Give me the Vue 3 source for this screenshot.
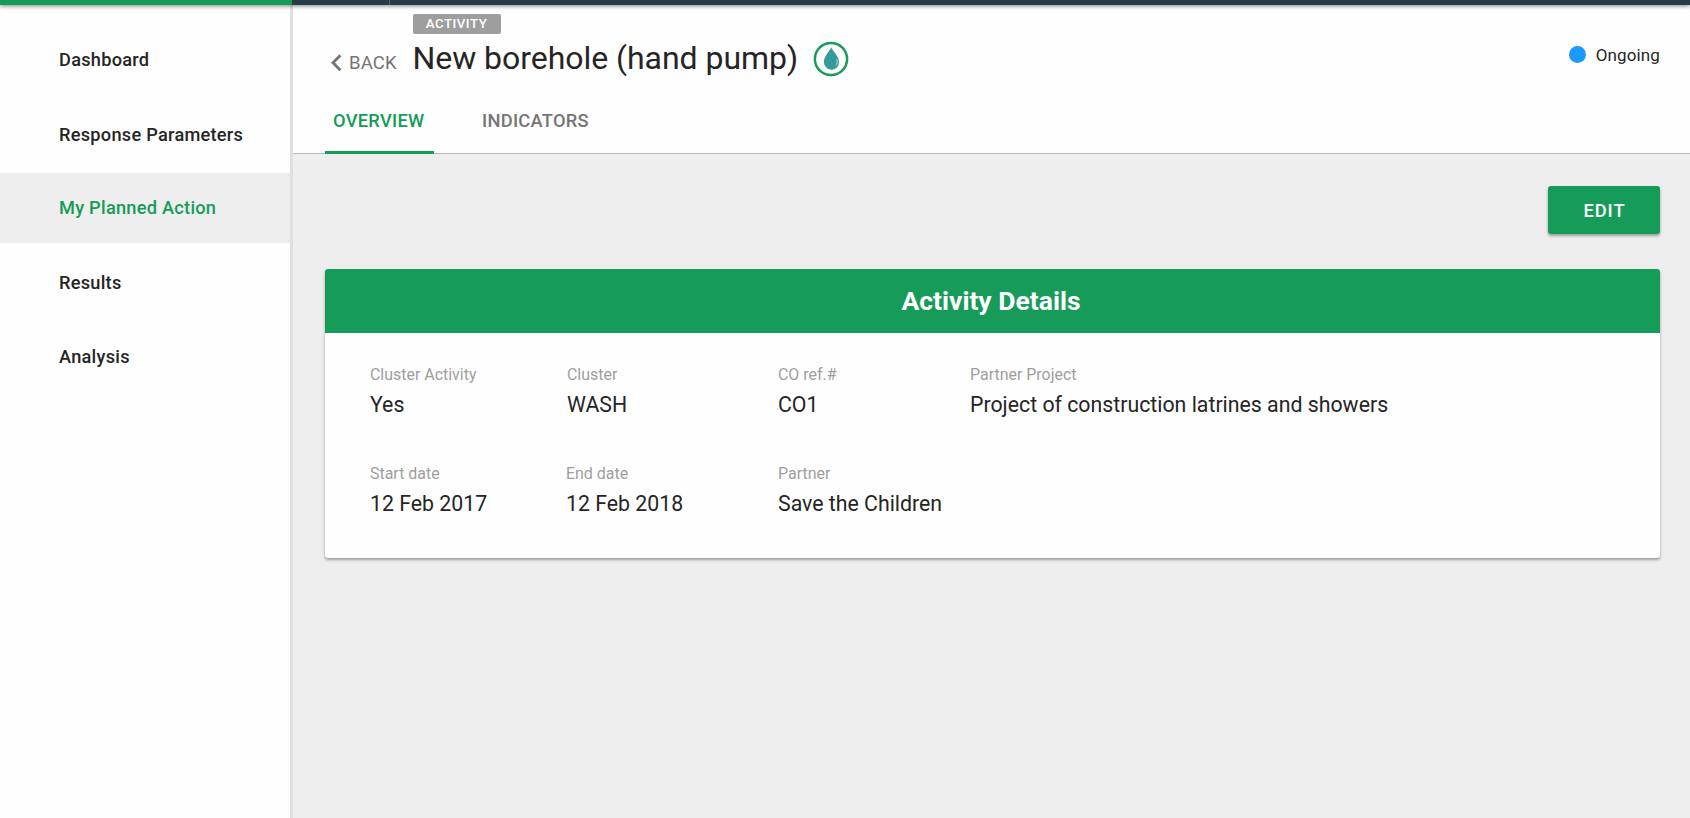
<script setup>
const nav = [
  { label: 'Dashboard' },
  { label: 'Response Parameters' },
  { label: 'My Planned Action', active: true },
  { label: 'Results' },
  { label: 'Analysis' },
]
const tabs = ['Overview', 'Indicators']
const rows = [
  [
    { label: 'Cluster Activity', value: 'Yes' },
    { label: 'Cluster', value: 'WASH' },
    { label: 'CO ref.#', value: 'CO1' },
    { label: 'Partner Project', value: 'Project of construction latrines and showers' },
  ],
  [
    { label: 'Start date', value: '12 Feb 2017' },
    { label: 'End date', value: '12 Feb 2018' },
    { label: 'Partner', value: 'Save the Children' },
  ],
]
</script>

<template>
  <div class="page">
    <div class="topbar">
      <div class="topbar-brand"></div>
      <div class="topbar-menu"></div>
    </div>
    <div class="body">
      <nav class="sidebar">
        <a v-for="item in nav" :key="item.label" class="nav-item" :class="{ active: item.active }">
          <span>{{ item.label }}</span>
        </a>
      </nav>
      <main class="main">
        <header class="header">
          <div class="heading">
            <a class="back">
              <svg class="chevron" width="11" height="18" viewBox="0 0 11 18">
                <path d="M9.400 1.200 2 8.700l7.400 7.500" fill="none" stroke="#757575" stroke-width="2.900" />
              </svg>
              <span class="back-text">BACK</span>
            </a>
            <div class="title-block">
              <span class="badge"><span>ACTIVITY</span></span>
              <div class="title-row">
                <h1 class="title">New borehole (hand pump)</h1>
                <svg class="drop" width="36" height="36" viewBox="0 0 36 36">
                  <circle cx="18" cy="18" r="16.100" fill="#fff" stroke="#179b59" stroke-width="2.500" />
                  <path d="M18.200 6.200C16.500 10.500 10.900 15.200 10.900 21.100a7.600 7.600 0 0 0 15.200 0C26.100 15.200 19.900 10.500 18.200 6.200Z" fill="#349a9c" />
                  <path d="M23.700 18.500c1 2.300.5 4.700-1.100 5.900" fill="none" stroke="#e4f2f2" stroke-width="0.900" />
                </svg>
              </div>
            </div>
            <div class="status"><i class="dot"></i><span class="status-text">Ongoing</span></div>
          </div>
          <div class="tabs">
            <a v-for="(tab, i) in tabs" :key="tab" class="tab" :class="{ selected: i === 0 }">
              <span>{{ tab }}</span>
            </a>
          </div>
        </header>
        <section class="content">
          <div class="actions"><button class="edit"><span>EDIT</span></button></div>
          <article class="card">
            <h2 class="card-title"><span>Activity Details</span></h2>
            <div class="details">
              <div v-for="(row, r) in rows" :key="r" class="row" :class="'row-' + r">
                <div v-for="field in row" :key="field.label" class="field">
                  <div class="label"><span>{{ field.label }}</span></div>
                  <div class="value"><span>{{ field.value }}</span></div>
                </div>
              </div>
            </div>
          </article>
        </section>
      </main>
    </div>
  </div>
</template>

<style>
body {
  margin: 0;
  overflow: hidden;
}
</style>

<style scoped>
* {
  box-sizing: border-box;
}
.page {
  display: flex;
  flex-direction: column;
  width: 1690px;
  height: 818px;
  overflow: hidden;
  background: #eee;
  color: #252525;
  font-family: Roboto, "Liberation Sans", sans-serif;
  white-space: nowrap;
}
.topbar {
  position: relative;
  z-index: 1;
  display: flex;
  flex: none;
  height: 5px;
  background: #263a48;
  box-shadow: 0 1px 4px rgba(0, 0, 0, 0.5);
}
.topbar-brand {
  width: 292px;
  background: #179b59;
}
.topbar-menu {
  width: 98px;
  border-right: 1px solid #4c5c67;
}
.body {
  display: flex;
  flex: 1;
}
.sidebar {
  display: flex;
  flex-direction: column;
  gap: 4px;
  width: 293px;
  padding-top: 20px;
  border-right: 3px solid #e0e0e0;
  background: #fefefe;
}
.nav-item {
  display: flex;
  align-items: center;
  height: 70px;
  padding-left: 59px;
  font-size: 18.200px;
  line-height: 60px;
  font-weight: 500;
  letter-spacing: 0.260px;
}
.nav-item:nth-child(2) {
  padding-top: 2px;
}
.nav-item:nth-child(4) {
  margin-top: 1px;
}
.nav-item.active {
  background: #eee;
  color: #179b59;
}
.main {
  flex: 1;
  display: flex;
  flex-direction: column;
}
.header {
  display: flex;
  flex-direction: column;
  justify-content: space-between;
  height: 149px;
  border-bottom: 1px solid #b8b8b8;
  background: #fefefe;
}
.heading {
  display: flex;
  padding: 9px 30px 0 38px;
}
.back {
  display: flex;
  width: 81.500px;
  height: 36px;
  margin-top: 31px;
  color: #757575;
  font-size: 18.500px;
  line-height: 36px;
  letter-spacing: 0.150px;
}
.chevron {
  margin: 9px 7px 0 0;
}
.title-block {
  display: flex;
  flex-direction: column;
  align-items: flex-start;
}
.badge {
  width: 88px;
  height: 20px;
  border-radius: 2px;
  background: #9e9e9e;
  color: #fff;
  font-size: 13.300px;
  line-height: 20px;
  font-weight: 500;
  letter-spacing: 0.500px;
  text-align: center;
}
.title-row {
  display: flex;
  gap: 15px;
  align-items: center;
  height: 46px;
  padding-top: 2px;
}
.title {
  margin: 0;
  font-size: 32px;
  line-height: 40px;
  font-weight: 400;
  letter-spacing: -0.040px;
}
.drop {
  margin-top: 2px;
}
.status {
  display: flex;
  align-items: center;
  height: 20px;
  margin: 30px 0 0 auto;
  font-size: 17px;
  line-height: 22px;
  letter-spacing: 0.120px;
}
.status-text {
  padding-top: 2px;
}
.dot {
  width: 17px;
  height: 17px;
  margin-right: 10px;
  border-radius: 50%;
  background: #1b9afc;
}
.tabs {
  display: flex;
  gap: 40px;
  height: 60px;
  margin: 0 0 -1px 32px;
}
.tab {
  height: 60px;
  padding: 0 8px;
  color: #757575;
  font-size: 18.300px;
  line-height: 54px;
  font-weight: 500;
  letter-spacing: 0.270px;
  text-transform: uppercase;
}
.tab.selected {
  width: 109px;
  border-bottom: 3px solid #179b59;
  color: #179b59;
}
.content {
  flex: 1;
  padding: 32px 30px 0 32px;
}
.actions {
  display: flex;
  justify-content: flex-end;
}
.edit {
  width: 112px;
  height: 48px;
  padding: 0 0 0 1px;
  border: 0;
  border-radius: 3px;
  background: #179b59;
  color: #fff;
  font-family: inherit;
  font-size: 18.300px;
  line-height: 50px;
  font-weight: 500;
  letter-spacing: 0.900px;
  box-shadow: 0 2px 3px rgba(0, 0, 0, 0.35);
}
.card {
  height: 289px;
  margin-top: 35px;
  overflow: hidden;
  border-radius: 3px;
  background: #fefefe;
  box-shadow: 0 2px 3px rgba(0, 0, 0, 0.35);
}
.card-title {
  height: 64px;
  margin: 0;
  padding-right: 3px;
  background: #179b59;
  color: #fff;
  font-size: 26.500px;
  line-height: 64px;
  font-weight: 700;
  text-align: center;
}
.details {
  display: flex;
  flex-direction: column;
  gap: 43px;
  padding: 32px 45px;
}
.row {
  display: grid;
  grid-template-columns: 197px 211px 192px 1fr;
}
.row-1 {
  grid-template-columns: 196px 212px 192px 1fr;
}
.label {
  height: 20px;
  color: #9e9e9e;
  font-size: 15.950px;
  line-height: 20px;
}
.value {
  height: 36px;
  font-size: 21.300px;
  line-height: 40px;
}
</style>
